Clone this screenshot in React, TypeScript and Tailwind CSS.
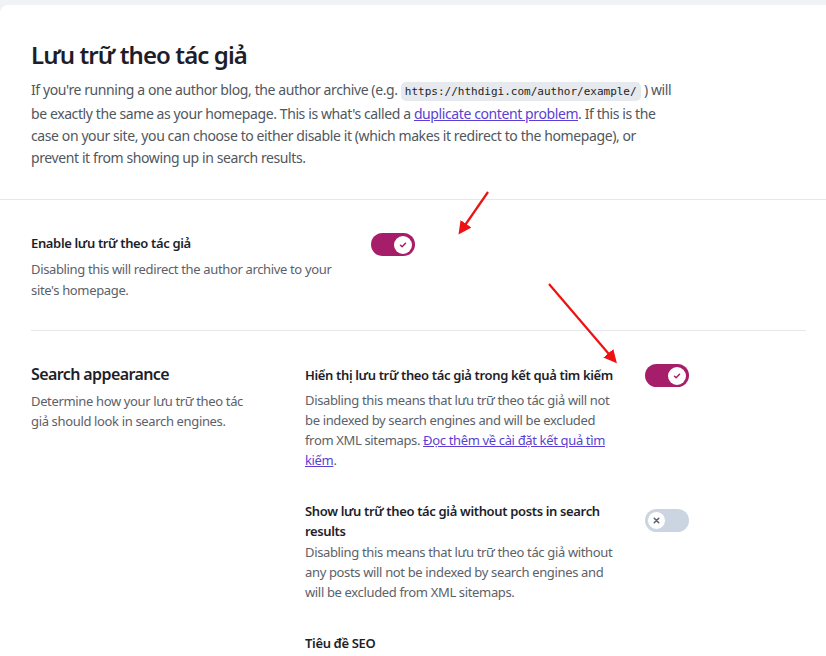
import React from "react";

const font = { fontFamily: '"Noto Sans", "Open Sans", sans-serif' };

const Toggle = ({ on }: { on: boolean }) => {
  if (on) {
    return (
      <div className="w-[44px] h-[23px] rounded-full bg-[#a61e69] flex items-center justify-end pr-[3px] shrink-0">
        <div className="w-[18px] h-[18px] rounded-full bg-white flex items-center justify-center">
          <svg width="10" height="10" viewBox="0 0 20 20" fill="none">
            <path d="M5 10.5l3.2 3L15 6.5" stroke="#a61e69" strokeWidth="3" strokeLinecap="round" strokeLinejoin="round" />
          </svg>
        </div>
      </div>
    );
  }
  return (
    <div className="w-[44px] h-[23px] rounded-full bg-[#cbd5e1] flex items-center pl-[2px] shrink-0">
      <div className="w-[19px] h-[19px] rounded-full bg-white border border-[#cbd5e1] flex items-center justify-center">
        <svg width="9" height="9" viewBox="0 0 20 20" fill="none">
          <path d="M5 5l10 10M15 5L5 15" stroke="#5b6473" strokeWidth="3.5" strokeLinecap="round" />
        </svg>
      </div>
    </div>
  );
};

const Arrows = () => (
  <svg className="absolute inset-0 pointer-events-none" width="826" height="656">
    <defs>
      <marker id="head" markerWidth="6" markerHeight="6" refX="4" refY="3" orient="auto" markerUnits="strokeWidth">
        <path d="M0,0 L6,3 L0,6 z" fill="#ee1111" />
      </marker>
    </defs>
    <line x1="488" y1="192" x2="461" y2="231" stroke="#ee1111" strokeWidth="2.2" markerEnd="url(#head)" />
    <line x1="549" y1="284" x2="614" y2="360" stroke="#ee1111" strokeWidth="2.2" markerEnd="url(#head)" />
  </svg>
);

export default function App() {
  return (
    <div className="relative w-[826px] h-[656px] overflow-hidden bg-[#f0f3f6] pt-[5px]" style={font}>
      <div className="bg-white rounded-tl-lg h-full">
        <div className="px-[31px] pt-[34px] pb-[30px]">
          <h1 className="text-[24px] leading-[32px] font-semibold tracking-[-0.9px] text-[#1e1e2a]">Lưu trữ theo tác giả</h1>
          <p className="mt-[8px] text-[14px] leading-[22px] tracking-[-0.4px] text-[#50575e] max-w-[650px]">
            If you're running a one author blog, the author archive (e.g.{" "}
            <code className="bg-[#e6e9ee] text-[#1e1e1e] rounded-[5px] px-[4px] py-[3px] text-[11px] tracking-normal" style={{ fontFamily: '"DejaVu Sans Mono", monospace' }}>
              https://hthdigi.com/author/example/
            </code>{" "}
            ) will be exactly the same as your homepage. This is what's called a{" "}
            <a className="text-[#5b3fd4] underline">duplicate content problem</a>. If this is the case on your site, you can choose to either disable it (which makes it redirect to the homepage), or prevent it from showing up in search results.
          </p>
        </div>
        <div className="border-t border-[#e5e7eb]" />
        <div className="px-[31px] pt-[33px] pb-[29px] flex gap-[20px]">
          <div className="w-[320px]">
            <div className="text-[13px] leading-[20px] font-semibold tracking-[-0.35px] text-[#1e1e2a]">Enable lưu trữ theo tác giả</div>
            <p className="mt-[6px] text-[13px] leading-[21px] tracking-[-0.35px] text-[#5c6169]">
              Disabling this will redirect the author archive to your site's homepage.
            </p>
          </div>
          <Toggle on />
        </div>
        <div className="ml-[31px] mr-[20px] border-t border-[#e5e7eb]" />
        <div className="px-[31px] pt-[34px] flex">
          <div className="w-[274px]">
            <h2 className="text-[16px] leading-[18px] font-semibold tracking-[-0.6px] text-[#1e1e2a]">Search appearance</h2>
            <p className="mt-[8px] text-[13px] leading-[20px] tracking-[-0.35px] text-[#5c6169] w-[220px]">
              Determine how your lưu trữ theo tác giả should look in search engines.
            </p>
          </div>
          <div className="flex flex-col gap-[31px]">
            <div className="flex gap-[20px]">
              <div className="w-[320px]">
                <div className="text-[13px] leading-[20px] font-semibold tracking-[-0.35px] text-[#1e1e2a]">Hiển thị lưu trữ theo tác giả trong kết quả tìm kiếm</div>
                <p className="mt-[5px] text-[13px] leading-[20px] tracking-[-0.35px] text-[#5c6169]">
                  Disabling this means that lưu trữ theo tác giả will not be indexed by search engines and will be excluded from XML sitemaps.{" "}
                  <a className="text-[#5b3fd4] underline">Đọc thêm về cài đặt kết quả tìm kiếm</a>.
                </p>
              </div>
              <div className="-mt-[1px]">
                <Toggle on />
              </div>
            </div>
            <div className="flex gap-[20px]">
              <div className="w-[320px]">
                <div className="text-[13px] leading-[20px] font-semibold tracking-[-0.35px] text-[#1e1e2a]">Show lưu trữ theo tác giả without posts in search results</div>
                <p className="mt-[1px] text-[13px] leading-[20px] tracking-[-0.35px] text-[#5c6169]">
                  Disabling this means that lưu trữ theo tác giả without any posts will not be indexed by search engines and will be excluded from XML sitemaps.
                </p>
              </div>
              <div className="pt-[8px]">
                <Toggle on={false} />
              </div>
            </div>
            <div className="text-[13px] leading-[20px] font-semibold tracking-[-0.35px] text-[#1e1e2a]">Tiêu đề SEO</div>
          </div>
        </div>
      </div>
      <Arrows />
    </div>
  );
}
